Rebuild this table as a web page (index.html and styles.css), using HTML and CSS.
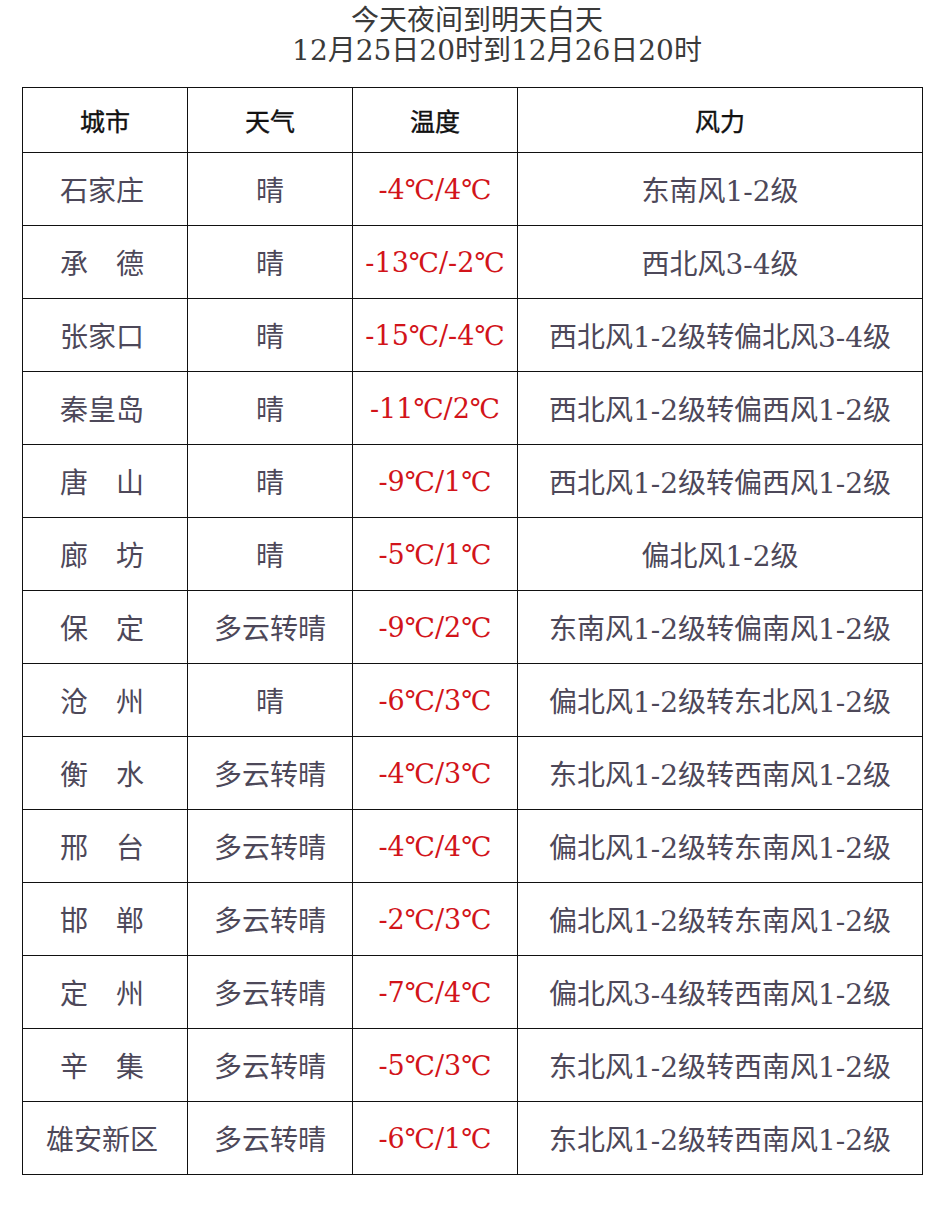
FILE: index.html
```html
<!DOCTYPE html>
<html lang="zh">
<head>
<meta charset="utf-8">
<title>今天夜间到明天白天</title>
<link rel="stylesheet" href="styles.css">
</head>
<body>
<div class="page">
  <div class="title">
    <div class="t1">今天夜间到明天白天</div>
    <div class="t2">12月25日20时到12月26日20时</div>
  </div>
  <table class="tbl">
    <thead>
      <tr><th>城市</th><th>天气</th><th>温度</th><th>风力</th></tr>
    </thead>
    <tbody>
      <tr><td>石家庄</td><td>晴</td><td class="temp">-4℃/4℃</td><td>东南风1-2级</td></tr>
      <tr><td>承　德</td><td>晴</td><td class="temp">-13℃/-2℃</td><td>西北风3-4级</td></tr>
      <tr><td>张家口</td><td>晴</td><td class="temp">-15℃/-4℃</td><td>西北风1-2级转偏北风3-4级</td></tr>
      <tr><td>秦皇岛</td><td>晴</td><td class="temp">-11℃/2℃</td><td>西北风1-2级转偏西风1-2级</td></tr>
      <tr><td>唐　山</td><td>晴</td><td class="temp">-9℃/1℃</td><td>西北风1-2级转偏西风1-2级</td></tr>
      <tr><td>廊　坊</td><td>晴</td><td class="temp">-5℃/1℃</td><td>偏北风1-2级</td></tr>
      <tr><td>保　定</td><td>多云转晴</td><td class="temp">-9℃/2℃</td><td>东南风1-2级转偏南风1-2级</td></tr>
      <tr><td>沧　州</td><td>晴</td><td class="temp">-6℃/3℃</td><td>偏北风1-2级转东北风1-2级</td></tr>
      <tr><td>衡　水</td><td>多云转晴</td><td class="temp">-4℃/3℃</td><td>东北风1-2级转西南风1-2级</td></tr>
      <tr><td>邢　台</td><td>多云转晴</td><td class="temp">-4℃/4℃</td><td>偏北风1-2级转东南风1-2级</td></tr>
      <tr><td>邯　郸</td><td>多云转晴</td><td class="temp">-2℃/3℃</td><td>偏北风1-2级转东南风1-2级</td></tr>
      <tr><td>定　州</td><td>多云转晴</td><td class="temp">-7℃/4℃</td><td>偏北风3-4级转西南风1-2级</td></tr>
      <tr><td>辛　集</td><td>多云转晴</td><td class="temp">-5℃/3℃</td><td>东北风1-2级转西南风1-2级</td></tr>
      <tr><td>雄安新区</td><td>多云转晴</td><td class="temp">-6℃/1℃</td><td>东北风1-2级转西南风1-2级</td></tr>
    </tbody>
  </table>
</div>
</body>
</html>
```
FILE: styles.css
```css
html, body {
  margin: 0;
  padding: 0;
  background: #ffffff;
}
.page {
  width: 942px;
  font-family: "DejaVu Serif", "Noto Sans CJK SC", serif;
}
.title {
  padding-top: 6px;
  height: 87px;
  box-sizing: border-box;
  color: #3a3a3a;
  font-size: 28px;
  line-height: 30px;
  text-align: center;
}
.t1 {
  padding-left: 12px;
}
.t2 {
  padding-left: 52px;
}
.tbl {
  margin-left: 22px;
  width: 901px;
  border-collapse: collapse;
  table-layout: fixed;
}
.tbl th, .tbl td {
  border: 1.5px solid #111;
  text-align: center;
  padding: 0;
  white-space: nowrap;
}
.tbl th {
  height: 64px;
  font-size: 25px;
  font-weight: normal;
  color: #111;
  -webkit-text-stroke: 0.4px #111;
}
.tbl th:nth-child(1), .tbl th:nth-child(2), .tbl th:nth-child(3) {
  width: 164px;
}
.tbl td {
  height: 72px;
  font-size: 28px;
  color: #4d4859;
}
.tbl td:first-child {
  padding-right: 6px;
}
.tbl td.temp {
  color: #d2141a;
  font-size: 27px;
}
```
